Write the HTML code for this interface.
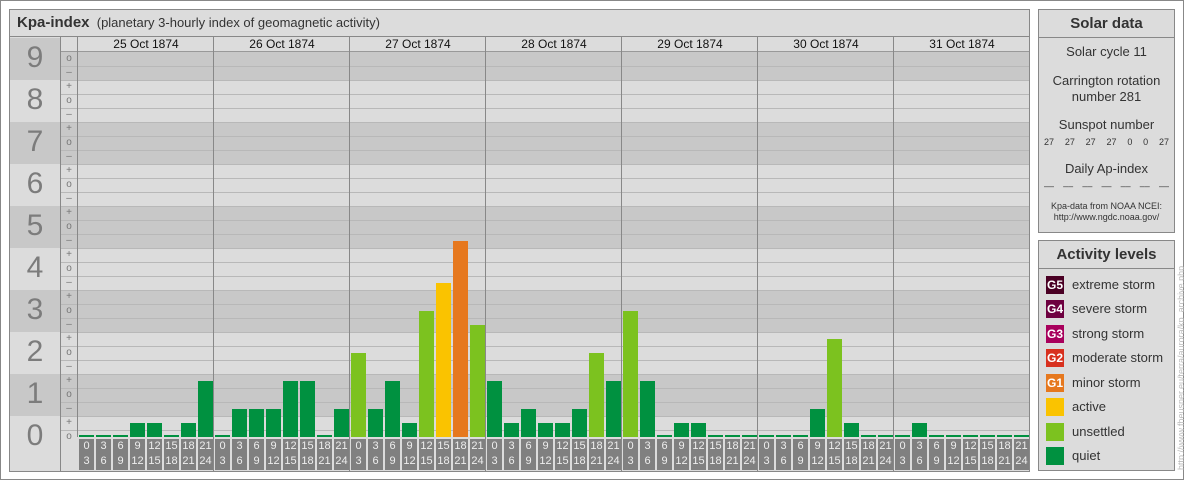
<!DOCTYPE html>
<html><head><meta charset="utf-8"><style>
*{margin:0;padding:0;box-sizing:border-box}
body{width:1184px;height:480px;background:#fff;position:relative;overflow:hidden;font-family:"Liberation Sans",sans-serif;}
.a{position:absolute}
#outer{left:0;top:0;width:1184px;height:480px;border:1px solid #888}
#main{left:9px;top:9px;width:1021px;height:463px;border:1px solid #888;background:#dcdcdc}
.bd{position:absolute;left:10px;width:1019px;height:42px}
.dk{background:#c8c8c8}.lt{background:#dcdcdc}
.num{position:absolute;left:10px;width:50px;text-align:center;font-size:30px;color:#7c7c7c}
.sl{position:absolute;left:61px;width:16px;text-align:center;font-size:10px;color:#777;line-height:10px}
.b{position:absolute;width:15px}
.q{background:#009140}.u{background:#7cc21f}.ac{background:#fac300}.g1{background:#e6781e}
.lb{position:absolute;top:439px;width:15px;height:31px;background:#808080;color:#eee;font-size:11px;text-align:center;line-height:15px}
.vl{position:absolute;top:37px;width:1px;height:434px;background:#888}
.dt{position:absolute;top:37px;width:136px;text-align:center;font-size:12px;line-height:14px;color:#111}
.box{position:absolute;left:1038px;width:137px;border:1px solid #888;background:#dcdcdc}
.bt{height:28px;border-bottom:1px solid #888;text-align:center;font-weight:bold;font-size:15px;line-height:28px;color:#333}
.sd{text-align:center;color:#333;font-size:13px}
.row{display:flex;justify-content:space-between;padding:0 5px;font-size:9px;color:#333}
.lg{position:absolute;left:7px;width:18px;height:18px;color:#fff;font-size:12px;font-weight:bold;line-height:18px;text-align:center}
.lt2{position:absolute;left:33px;font-size:13px;color:#333;line-height:18px}
</style></head><body>
<div class="a" id="outer"></div>
<div class="a" id="main"></div>
<div class="a" style="left:10px;top:10px;width:1019px;height:27px;border-bottom:1px solid #888;font-size:13px;line-height:26px;color:#333;padding-left:7px"><b style="font-size:15px">Kpa-index</b>&nbsp;&nbsp;(planetary 3-hourly index of geomagnetic activity)</div>
<div class="bd dk" style="top:38px"></div>
<div class="bd lt" style="top:80px"></div>
<div class="bd dk" style="top:122px"></div>
<div class="bd lt" style="top:164px"></div>
<div class="bd dk" style="top:206px"></div>
<div class="bd lt" style="top:248px"></div>
<div class="bd dk" style="top:290px"></div>
<div class="bd lt" style="top:332px"></div>
<div class="bd dk" style="top:374px"></div>
<div class="bd lt" style="top:416px;height:55px"></div>
<div class="a" style="left:61px;top:53px;width:968px;height:378px;background:repeating-linear-gradient(to bottom,transparent 0 13px,#b8b8b8 13px 14px)"></div>
<div class="a" style="left:61px;top:37px;width:968px;height:15px;background:#dcdcdc;border-bottom:1px solid #999"></div>
<div class="a" style="left:60px;top:37px;width:1px;height:434px;background:#888"></div>
<div class="a" style="left:77px;top:37px;width:1px;height:434px;background:#888"></div>
<div class="a" style="left:61px;top:437px;width:968px;height:34px;background:#dcdcdc"></div>
<div class="num" style="top:41px">9</div>
<div class="num" style="top:83px">8</div>
<div class="num" style="top:125px">7</div>
<div class="num" style="top:167px">6</div>
<div class="num" style="top:209px">5</div>
<div class="num" style="top:251px">4</div>
<div class="num" style="top:293px">3</div>
<div class="num" style="top:335px">2</div>
<div class="num" style="top:377px">1</div>
<div class="num" style="top:419px">0</div>
<div class="sl" style="top:54px">o</div><div class="sl" style="top:68px">–</div>
<div class="sl" style="top:82px">+</div><div class="sl" style="top:96px">o</div><div class="sl" style="top:110px">–</div>
<div class="sl" style="top:124px">+</div><div class="sl" style="top:138px">o</div><div class="sl" style="top:152px">–</div>
<div class="sl" style="top:166px">+</div><div class="sl" style="top:180px">o</div><div class="sl" style="top:194px">–</div>
<div class="sl" style="top:208px">+</div><div class="sl" style="top:222px">o</div><div class="sl" style="top:236px">–</div>
<div class="sl" style="top:250px">+</div><div class="sl" style="top:264px">o</div><div class="sl" style="top:278px">–</div>
<div class="sl" style="top:292px">+</div><div class="sl" style="top:306px">o</div><div class="sl" style="top:320px">–</div>
<div class="sl" style="top:334px">+</div><div class="sl" style="top:348px">o</div><div class="sl" style="top:362px">–</div>
<div class="sl" style="top:376px">+</div><div class="sl" style="top:390px">o</div><div class="sl" style="top:404px">–</div>
<div class="sl" style="top:418px">+</div><div class="sl" style="top:432px">o</div>
<div class="vl" style="left:213px"></div><div class="vl" style="left:349px"></div><div class="vl" style="left:485px"></div><div class="vl" style="left:621px"></div><div class="vl" style="left:757px"></div><div class="vl" style="left:893px"></div>
<div class="dt" style="left:78px">25 Oct 1874</div>
<div class="dt" style="left:214px">26 Oct 1874</div>
<div class="dt" style="left:350px">27 Oct 1874</div>
<div class="dt" style="left:486px">28 Oct 1874</div>
<div class="dt" style="left:622px">29 Oct 1874</div>
<div class="dt" style="left:758px">30 Oct 1874</div>
<div class="dt" style="left:894px">31 Oct 1874</div>
<div class="b q" style="left:79px;top:435px;height:2px"></div>
<div class="b q" style="left:96px;top:435px;height:2px"></div>
<div class="b q" style="left:113px;top:435px;height:2px"></div>
<div class="b q" style="left:130px;top:423px;height:14px"></div>
<div class="b q" style="left:147px;top:423px;height:14px"></div>
<div class="b q" style="left:164px;top:435px;height:2px"></div>
<div class="b q" style="left:181px;top:423px;height:14px"></div>
<div class="b q" style="left:198px;top:381px;height:56px"></div>
<div class="b q" style="left:215px;top:435px;height:2px"></div>
<div class="b q" style="left:232px;top:409px;height:28px"></div>
<div class="b q" style="left:249px;top:409px;height:28px"></div>
<div class="b q" style="left:266px;top:409px;height:28px"></div>
<div class="b q" style="left:283px;top:381px;height:56px"></div>
<div class="b q" style="left:300px;top:381px;height:56px"></div>
<div class="b q" style="left:317px;top:435px;height:2px"></div>
<div class="b q" style="left:334px;top:409px;height:28px"></div>
<div class="b u" style="left:351px;top:353px;height:84px"></div>
<div class="b q" style="left:368px;top:409px;height:28px"></div>
<div class="b q" style="left:385px;top:381px;height:56px"></div>
<div class="b q" style="left:402px;top:423px;height:14px"></div>
<div class="b u" style="left:419px;top:311px;height:126px"></div>
<div class="b ac" style="left:436px;top:283px;height:154px"></div>
<div class="b g1" style="left:453px;top:241px;height:196px"></div>
<div class="b u" style="left:470px;top:325px;height:112px"></div>
<div class="b q" style="left:487px;top:381px;height:56px"></div>
<div class="b q" style="left:504px;top:423px;height:14px"></div>
<div class="b q" style="left:521px;top:409px;height:28px"></div>
<div class="b q" style="left:538px;top:423px;height:14px"></div>
<div class="b q" style="left:555px;top:423px;height:14px"></div>
<div class="b q" style="left:572px;top:409px;height:28px"></div>
<div class="b u" style="left:589px;top:353px;height:84px"></div>
<div class="b q" style="left:606px;top:381px;height:56px"></div>
<div class="b u" style="left:623px;top:311px;height:126px"></div>
<div class="b q" style="left:640px;top:381px;height:56px"></div>
<div class="b q" style="left:657px;top:435px;height:2px"></div>
<div class="b q" style="left:674px;top:423px;height:14px"></div>
<div class="b q" style="left:691px;top:423px;height:14px"></div>
<div class="b q" style="left:708px;top:435px;height:2px"></div>
<div class="b q" style="left:725px;top:435px;height:2px"></div>
<div class="b q" style="left:742px;top:435px;height:2px"></div>
<div class="b q" style="left:759px;top:435px;height:2px"></div>
<div class="b q" style="left:776px;top:435px;height:2px"></div>
<div class="b q" style="left:793px;top:435px;height:2px"></div>
<div class="b q" style="left:810px;top:409px;height:28px"></div>
<div class="b u" style="left:827px;top:339px;height:98px"></div>
<div class="b q" style="left:844px;top:423px;height:14px"></div>
<div class="b q" style="left:861px;top:435px;height:2px"></div>
<div class="b q" style="left:878px;top:435px;height:2px"></div>
<div class="b q" style="left:895px;top:435px;height:2px"></div>
<div class="b q" style="left:912px;top:423px;height:14px"></div>
<div class="b q" style="left:929px;top:435px;height:2px"></div>
<div class="b q" style="left:946px;top:435px;height:2px"></div>
<div class="b q" style="left:963px;top:435px;height:2px"></div>
<div class="b q" style="left:980px;top:435px;height:2px"></div>
<div class="b q" style="left:997px;top:435px;height:2px"></div>
<div class="b q" style="left:1014px;top:435px;height:2px"></div>
<div class="lb" style="left:79px">0<br>3</div><div class="lb" style="left:96px">3<br>6</div><div class="lb" style="left:113px">6<br>9</div><div class="lb" style="left:130px">9<br>12</div><div class="lb" style="left:147px">12<br>15</div><div class="lb" style="left:164px">15<br>18</div><div class="lb" style="left:181px">18<br>21</div><div class="lb" style="left:198px">21<br>24</div>
<div class="lb" style="left:215px">0<br>3</div><div class="lb" style="left:232px">3<br>6</div><div class="lb" style="left:249px">6<br>9</div><div class="lb" style="left:266px">9<br>12</div><div class="lb" style="left:283px">12<br>15</div><div class="lb" style="left:300px">15<br>18</div><div class="lb" style="left:317px">18<br>21</div><div class="lb" style="left:334px">21<br>24</div>
<div class="lb" style="left:351px">0<br>3</div><div class="lb" style="left:368px">3<br>6</div><div class="lb" style="left:385px">6<br>9</div><div class="lb" style="left:402px">9<br>12</div><div class="lb" style="left:419px">12<br>15</div><div class="lb" style="left:436px">15<br>18</div><div class="lb" style="left:453px">18<br>21</div><div class="lb" style="left:470px">21<br>24</div>
<div class="lb" style="left:487px">0<br>3</div><div class="lb" style="left:504px">3<br>6</div><div class="lb" style="left:521px">6<br>9</div><div class="lb" style="left:538px">9<br>12</div><div class="lb" style="left:555px">12<br>15</div><div class="lb" style="left:572px">15<br>18</div><div class="lb" style="left:589px">18<br>21</div><div class="lb" style="left:606px">21<br>24</div>
<div class="lb" style="left:623px">0<br>3</div><div class="lb" style="left:640px">3<br>6</div><div class="lb" style="left:657px">6<br>9</div><div class="lb" style="left:674px">9<br>12</div><div class="lb" style="left:691px">12<br>15</div><div class="lb" style="left:708px">15<br>18</div><div class="lb" style="left:725px">18<br>21</div><div class="lb" style="left:742px">21<br>24</div>
<div class="lb" style="left:759px">0<br>3</div><div class="lb" style="left:776px">3<br>6</div><div class="lb" style="left:793px">6<br>9</div><div class="lb" style="left:810px">9<br>12</div><div class="lb" style="left:827px">12<br>15</div><div class="lb" style="left:844px">15<br>18</div><div class="lb" style="left:861px">18<br>21</div><div class="lb" style="left:878px">21<br>24</div>
<div class="lb" style="left:895px">0<br>3</div><div class="lb" style="left:912px">3<br>6</div><div class="lb" style="left:929px">6<br>9</div><div class="lb" style="left:946px">9<br>12</div><div class="lb" style="left:963px">12<br>15</div><div class="lb" style="left:980px">15<br>18</div><div class="lb" style="left:997px">18<br>21</div><div class="lb" style="left:1014px">21<br>24</div>
<div class="box" style="top:9px;height:224px">
<div class="bt">Solar data</div>
<div class="sd" style="margin-top:6px">Solar cycle 11</div>
<div class="sd" style="margin-top:14px;line-height:16px">Carrington rotation<br>number 281</div>
<div class="sd" style="margin-top:12px">Sunspot number</div>
<div class="row" style="margin-top:5px"><span>27</span><span>27</span><span>27</span><span>27</span><span>0</span><span>0</span><span>27</span></div>
<div class="sd" style="margin-top:14px">Daily Ap-index</div>
<div class="row" style="margin-top:5px"><span>––</span><span>––</span><span>––</span><span>––</span><span>––</span><span>––</span><span>––</span></div>
<div class="sd" style="margin-top:10px;font-size:9px;line-height:11px">Kpa-data from NOAA NCEI:<br>http://www.ngdc.noaa.gov/</div>
</div>
<div class="box" style="top:240px;height:231px">
<div class="bt">Activity levels</div>
<div class="lg" style="top:35px;background:#4a0024">G5</div><div class="lt2" style="top:35px">extreme storm</div>
<div class="lg" style="top:59px;background:#6e0040">G4</div><div class="lt2" style="top:59px">severe storm</div>
<div class="lg" style="top:84px;background:#a8005c">G3</div><div class="lt2" style="top:84px">strong storm</div>
<div class="lg" style="top:108px;background:#d8301e">G2</div><div class="lt2" style="top:108px">moderate storm</div>
<div class="lg" style="top:133px;background:#e6781e">G1</div><div class="lt2" style="top:133px">minor storm</div>
<div class="lg" style="top:157px;background:#fac300"></div><div class="lt2" style="top:157px">active</div>
<div class="lg" style="top:182px;background:#7cc21f"></div><div class="lt2" style="top:182px">unsettled</div>
<div class="lg" style="top:206px;background:#009140"></div><div class="lt2" style="top:206px">quiet</div>
</div>
<div class="a" style="left:1176px;top:470px;transform:rotate(-90deg);transform-origin:0 0;white-space:nowrap;font-size:9px;color:#bbb;width:230px">http://www.fheusner.eu/terra/aurora/kp_archive.php</div>
</body></html>
